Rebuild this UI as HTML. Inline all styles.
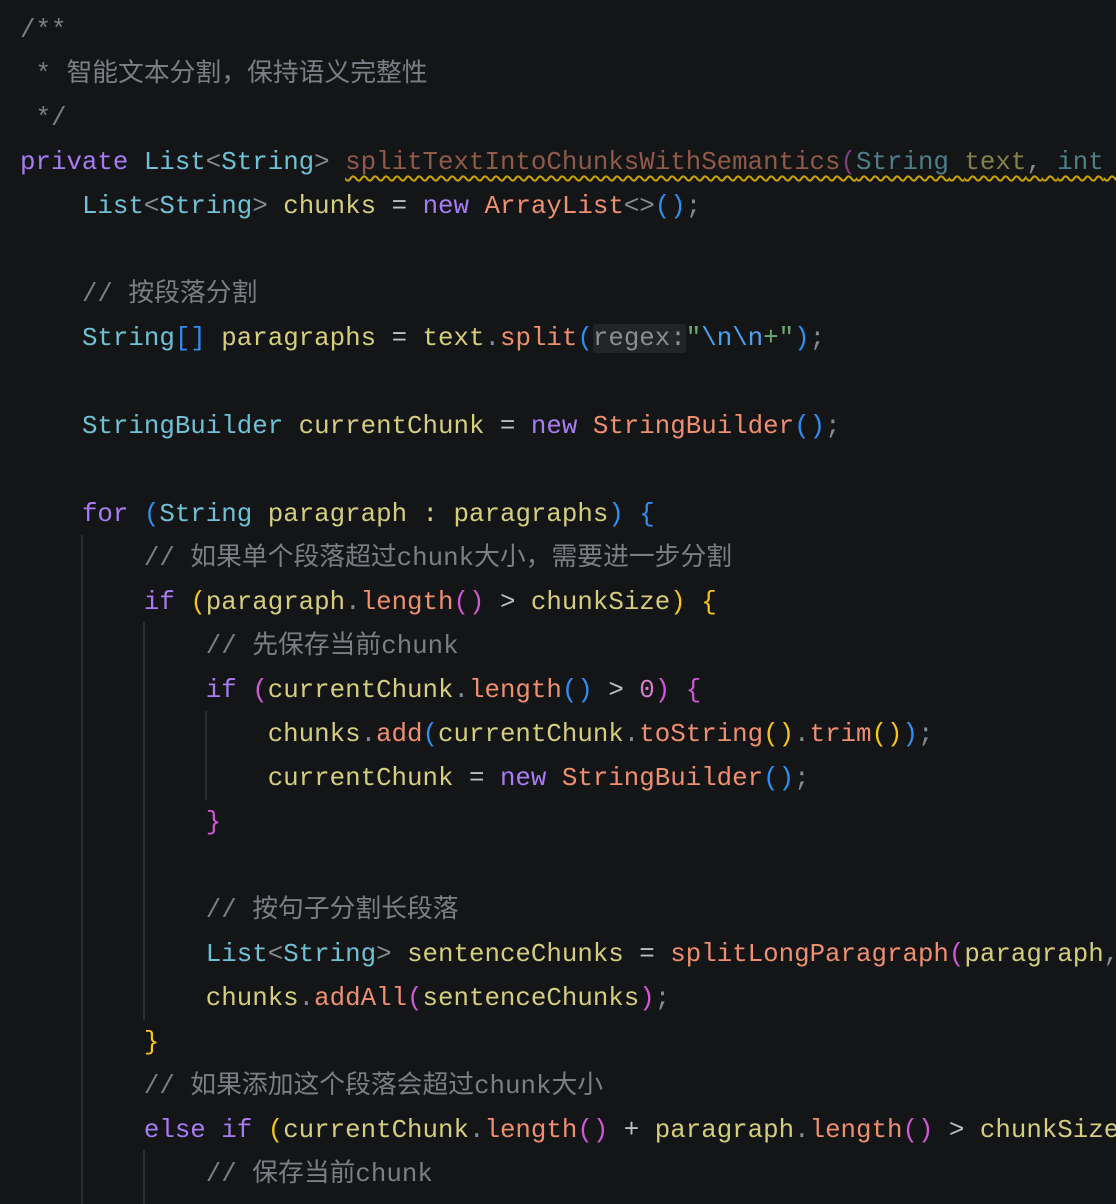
<!DOCTYPE html>
<html><head><meta charset="utf-8"><style>
html,body{margin:0;padding:0;background:#141517;width:1116px;height:1204px;overflow:hidden}
.wrap{position:absolute;left:0;top:0;width:1116px;height:1204px;overflow:hidden}
.code{position:absolute;left:20px;top:9px;font-family:"Liberation Mono","Noto Sans CJK SC",monospace;font-size:25.8px;line-height:44px;white-space:pre;color:#bcbec4}
.g{position:absolute;width:2px;background:#2a2c30}
.c{color:#7a7e85}.k{color:#a77cf2}.t{color:#6fc1d5}.v{color:#d5ce7d}.m{color:#ee8f6f}.o{color:#bcbec4}.p{color:#868a91}
.b1{color:#2f8ff0}.b2{color:#f5c518}.b3{color:#d158d4}.s{color:#6aab73}.e{color:#4ca0f0}.n{color:#d77cc8}
.h{color:#8a8d92;background:#222427;border-radius:3px}
.w{text-decoration:underline wavy #c9a400;text-decoration-thickness:1.5px;text-underline-offset:6px}
.dm{color:#8f5a48}.dt{color:#4d7f88}.dv{color:#858048}.dp{color:#7d3f80}
</style></head><body><div class="wrap">
<div class="g" style="left:81px;top:535px;height:669px"></div>
<div class="g" style="left:143px;top:622px;height:398px"></div>
<div class="g" style="left:143px;top:1150px;height:54px"></div>
<div class="g" style="left:205px;top:711px;height:89px"></div>
<div class="code"><span class="c">/**
 * 智能文本分割，保持语义完整性
 */</span>
<span class="k">private</span> <span class="t">List</span><span class="p">&lt;</span><span class="t">String</span><span class="p">&gt;</span> <span class="w"><span class="dm">splitTextIntoChunksWithSemantics</span><span class="dp">(</span><span class="dt">String</span> <span class="dv">text</span><span class="p">,</span> <span class="dt">int</span> <span class="dv">chunkSize</span><span class="dp">)</span> {</span>
    <span class="t">List</span><span class="p">&lt;</span><span class="t">String</span><span class="p">&gt;</span> <span class="v">chunks</span> = <span class="k">new</span> <span class="m">ArrayList</span><span class="p">&lt;&gt;</span><span class="b1">()</span><span class="p">;</span>

    <span class="c">// 按段落分割</span>
    <span class="t">String</span><span class="b1">[]</span> <span class="v">paragraphs</span> = <span class="v">text</span><span class="p">.</span><span class="m">split</span><span class="b1">(</span><span class="h">regex:</span><span class="s">"</span><span class="e">\n\n</span><span class="s">+"</span><span class="b1">)</span><span class="p">;</span>

    <span class="t">StringBuilder</span> <span class="v">currentChunk</span> = <span class="k">new</span> <span class="m">StringBuilder</span><span class="b1">()</span><span class="p">;</span>

    <span class="k">for</span> <span class="b1">(</span><span class="t">String</span> <span class="v">paragraph</span> <span class="v">:</span> <span class="v">paragraphs</span><span class="b1">)</span> <span class="b1">{</span>
        <span class="c">// 如果单个段落超过chunk大小，需要进一步分割</span>
        <span class="k">if</span> <span class="b2">(</span><span class="v">paragraph</span><span class="p">.</span><span class="m">length</span><span class="b3">()</span> &gt; <span class="v">chunkSize</span><span class="b2">)</span> <span class="b2">{</span>
            <span class="c">// 先保存当前chunk</span>
            <span class="k">if</span> <span class="b3">(</span><span class="v">currentChunk</span><span class="p">.</span><span class="m">length</span><span class="b1">()</span> &gt; <span class="n">0</span><span class="b3">)</span> <span class="b3">{</span>
                <span class="v">chunks</span><span class="p">.</span><span class="m">add</span><span class="b1">(</span><span class="v">currentChunk</span><span class="p">.</span><span class="m">toString</span><span class="b2">()</span><span class="p">.</span><span class="m">trim</span><span class="b2">()</span><span class="b1">)</span><span class="p">;</span>
                <span class="v">currentChunk</span> = <span class="k">new</span> <span class="m">StringBuilder</span><span class="b1">()</span><span class="p">;</span>
            <span class="b3">}</span>

            <span class="c">// 按句子分割长段落</span>
            <span class="t">List</span><span class="p">&lt;</span><span class="t">String</span><span class="p">&gt;</span> <span class="v">sentenceChunks</span> = <span class="m">splitLongParagraph</span><span class="b3">(</span><span class="v">paragraph</span><span class="p">,</span> <span class="v">chunkSize</span><span class="b3">)</span><span class="p">;</span>
            <span class="v">chunks</span><span class="p">.</span><span class="m">addAll</span><span class="b3">(</span><span class="v">sentenceChunks</span><span class="b3">)</span><span class="p">;</span>
        <span class="b2">}</span>
        <span class="c">// 如果添加这个段落会超过chunk大小</span>
        <span class="k">else if</span> <span class="b2">(</span><span class="v">currentChunk</span><span class="p">.</span><span class="m">length</span><span class="b3">()</span> + <span class="v">paragraph</span><span class="p">.</span><span class="m">length</span><span class="b3">()</span> &gt; <span class="v">chunkSize</span><span class="b2">)</span> <span class="b2">{</span>
            <span class="c">// 保存当前chunk</span>
</div>
</div></body></html>
